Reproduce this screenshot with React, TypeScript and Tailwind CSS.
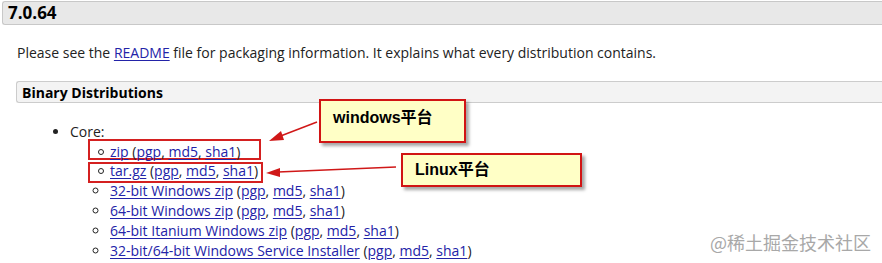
const links = [
  { name: "zip", box: "-mt-[3px] mb-[2px] pt-[5px] w-[173px]" },
  { name: "tar.gz", box: "mt-[1px] -mb-[2px] pb-[3px] w-[175px]" },
  { name: "32-bit Windows zip" },
  { name: "64-bit Windows zip" },
  { name: "64-bit Itanium Windows zip" },
  { name: "32-bit/64-bit Windows Service Installer" },
];

const A = ({ children }: { children: React.ReactNode }) => (
  <a href="#" className="text-[#2323a8] underline underline-offset-2">
    {children}
  </a>
);

const Callout = ({ className, children }: { className: string; children: React.ReactNode }) => (
  <div
    className={`absolute flex items-center border-2 border-[#d11414] bg-[#ffffc6] shadow-[3px_3px_3px_rgba(0,0,0,0.35)] font-['Liberation_Sans','Noto_Sans_CJK_SC',sans-serif] text-[16px] font-bold text-black ${className}`}
  >
    {children}
  </div>
);

export default function App() {
  return (
    <div className="relative h-[263px] w-[882px] overflow-hidden bg-white font-['Open_Sans',sans-serif] text-[14px] text-[#222]">
      {/* version header */}
      <div className="ml-[2px] mt-[1px] flex h-[24px] items-center rounded-l-[3px] border border-r-0 border-[#c8c8c8] bg-[#e8e8e8] pl-[5px] text-[17px] font-bold text-black">
        7.0.64
      </div>

      <div className="pl-[16px]">
        <p className="mt-[18px] pl-[1px] leading-[20px]">
          Please see the <A>README</A> file for packaging information. It explains what every
          distribution contains.
        </p>

        <div className="mt-[18px] flex h-[22px] items-center rounded-l-[3px] border border-r-0 border-[#cccccc] bg-[#f3f3f3] pl-[5px] text-[14px] font-bold text-black">
          Binary Distributions
        </div>

        <ul className="mt-[19px] list-disc pl-[54px] leading-[20px]">
          <li>
            Core:
            <ul className="list-[circle] pl-[40px]">
              {links.map((l) =>
                l.box ? (
                  // annotated rows: red frame drawn round bullet and text
                  <li
                    key={l.name}
                    className={`-ml-[22px] flex h-[21px] list-none items-center whitespace-nowrap border-2 border-[#d42020] pl-[8px] ${l.box}`}
                  >
                    <span className="mr-[6px] size-[6px] shrink-0 rounded-full border border-[#222]" />
                    <span>
                      <A>{l.name}</A> (<A>pgp</A>, <A>md5</A>, <A>sha1</A>)
                    </span>
                  </li>
                ) : (
                  <li key={l.name}>
                    <A>{l.name}</A> (<A>pgp</A>, <A>md5</A>, <A>sha1</A>)
                  </li>
                )
              )}
            </ul>
          </li>
        </ul>
      </div>

      {/* arrows */}
      <svg className="absolute left-0 top-0" width="882" height="263" viewBox="0 0 882 263">
        <g stroke="#d01818" strokeWidth="1.5" fill="#d01818">
          <line x1="317" y1="122" x2="278" y2="137" />
          <polygon points="269,141 281,131 284,140" stroke="none" />
          <line x1="396" y1="167" x2="278" y2="172" />
          <polygon points="266,173 280,168 280,177" stroke="none" />
        </g>
      </svg>

      <Callout className="left-[319px] top-[99px] h-[44px] w-[147px] pl-[12px] pb-[6px]">windows平台</Callout>
      <Callout className="left-[401px] top-[153px] h-[34px] w-[181px] pl-[12px]">Linux平台</Callout>

      {/* watermark */}
      <div className="absolute left-[710px] top-[232px] font-['Noto_Sans_CJK_SC',sans-serif] text-[18px] leading-[20px] text-[#a8a8a8]">
        @稀土掘金技术社区
      </div>
    </div>
  );
}
